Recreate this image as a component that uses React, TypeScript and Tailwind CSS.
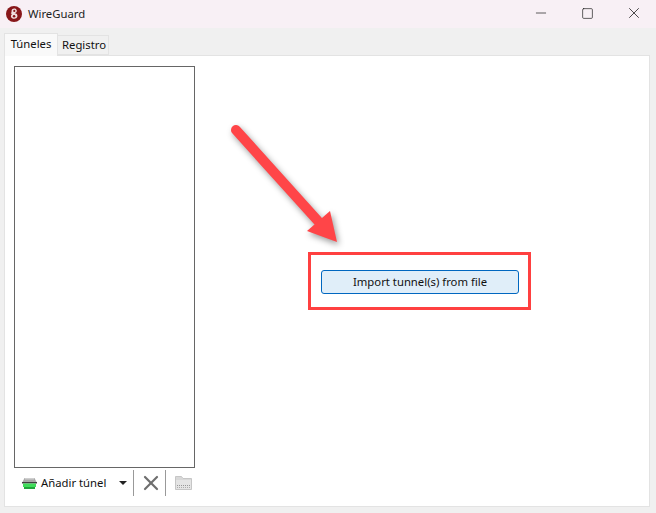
import { Minus, Square, X } from "lucide-react";

function Logo() {
    return (
        <svg width="16" height="16" viewBox="0 0 16 16" className="shrink-0">
            <circle cx="8" cy="8" r="8" fill="#88171a"/>
            <path d="M4.8 7.6 C5.6 6.6 5.6 5.6 5.6 4.6 C5.8 2 10.4 1.8 10.8 4.6 C11 6 10 7 8.6 7.2 C10.8 7.4 11.8 8.8 11.4 10.6 C10.8 13.4 5.8 13.6 5 10.8 C4.7 9.6 5.2 8.6 6.2 8 Z" fill="#f1dfdf"/>
            <circle cx="8.3" cy="4.9" r="1.1" fill="#88171a"/>
            <circle cx="8.1" cy="10.3" r="1.3" fill="#88171a"/>
        </svg>
    );
}

function AddIcon() {
    return (
        <svg width="15" height="11" viewBox="0 0 15 11" className="shrink-0">
            <path d="M2.5 0 H12.5 L14.5 4 H0.5 Z" fill="#a9a9a9"/>
            <rect x="3" y="0" width="9" height="1.5" fill="#cfcfcf"/>
            <rect x="0" y="4" width="15" height="1.5" fill="#3f3f3f"/>
            <rect x="1" y="5.5" width="13" height="3.5" fill="#3fdc5a"/>
            <rect x="2" y="9" width="11" height="2" fill="#1fa53a"/>
        </svg>
    );
}

function ExportIcon() {
    return (
        <svg width="17" height="14" viewBox="0 0 17 14" className="shrink-0">
            <path d="M0.5 0.5 H6.5 L8 2.5 H16.5 V13.5 H0.5 Z" fill="#d8d8d8" stroke="#c6c6c6"/>
            <rect x="1" y="4" width="15" height="9" fill="#e4e4e4"/>
            <path d="M2 9.5 H15" stroke="#969696" strokeDasharray="1 1"/>
            <path d="M2 11.5 H15" stroke="#adadad" strokeDasharray="1 1"/>
        </svg>
    );
}

export default function App() {
    return (
        <div className="relative w-[656px] h-[513px] flex flex-col overflow-hidden bg-[#f0f0f0] text-[11.3px] text-[#111] font-['Noto_Sans','Open_Sans',sans-serif]">
            {/* Title bar */}
            <div className="h-[28px] flex items-center bg-[#f8f0f5] pl-[6px]">
                <Logo/>
                <span className="ml-[6px] text-[#222]">WireGuard</span>
                <div className="ml-auto flex items-center pb-[2px]">
                    <div className="w-[46px] flex justify-center"><Minus size={16} strokeWidth={1} color="#111"/></div>
                    <div className="w-[46px] flex justify-center"><Square size={13} strokeWidth={1.2} color="#111"/></div>
                    <div className="ml-[2px] w-[44px] flex justify-center"><X size={18} strokeWidth={1} color="#111"/></div>
                </div>
            </div>

            {/* Tabs */}
            <div className="h-[27px] flex items-end pl-[4px]">
                <div className="h-[23px] w-[54px] pb-[2px] flex items-center justify-center bg-[#f9f9f9] border border-b-0 border-[#e3e3e3] relative top-[1px] z-10">Túneles</div>
                <div className="h-[20px] w-[51px] pt-[1px] pl-[2px] flex items-center justify-center bg-[#f0f0f0] border border-l-0 border-[#e3e3e3]">Registro</div>
            </div>

            {/* Tab page */}
            <div className="ml-[4px] mr-[6px] h-[452px] bg-white border border-[#e3e3e3] pt-[10px] pl-[9px] pr-[10px] flex">
                <div className="w-[181px] flex flex-col shrink-0">
                    <div className="h-[402px] border border-[#666] bg-white"/>
                    <div className="h-[28px] mt-[1px] flex items-center">
                        <div className="ml-[8px] mt-[1px]"><AddIcon/></div>
                        <span className="ml-[4px] w-[78px]">Añadir túnel</span>
                        <div className="w-0 h-0 border-x-[4.5px] border-x-transparent border-t-[4px] border-t-[#222]"/>
                        <div className="ml-[6px] w-px h-[26px] bg-[#999]"/>
                        <div className="w-[31px] pl-[3px] flex justify-center"><X size={24} strokeWidth={2.2} color="#6e6e6e"/></div>
                        <div className="w-px h-[26px] bg-[#999]"/>
                        <div className="ml-[9px]"><ExportIcon/></div>
                    </div>
                </div>
                <div className="flex-1 flex items-center justify-center pb-[11px] pl-[4px]">
                    <div className="w-[223px] h-[58px] border-[3px] border-[#ff4040] flex items-center justify-center pt-[2px] pl-[1px]">
                        <button className="w-[198px] h-[24px] pt-[1px] pl-[1px] bg-[#e0eef9] border border-[#0067c0] rounded-[3px] text-[#111]">
                            Import tunnel(s) from file
                        </button>
                    </div>
                </div>
            </div>

            {/* Annotation arrow */}
            <svg width="130" height="140" viewBox="0 0 130 140" className="absolute left-[220px] top-[115px] drop-shadow-[2px_3px_3px_rgba(0,0,0,0.4)]">
                <path d="M16 15 L98 106" stroke="#ff4548" strokeWidth="10" strokeLinecap="round" fill="none"/>
                <path d="M110 96 L117 127 L87 116 Z" fill="#ff4548"/>
            </svg>
        </div>
    );
}
